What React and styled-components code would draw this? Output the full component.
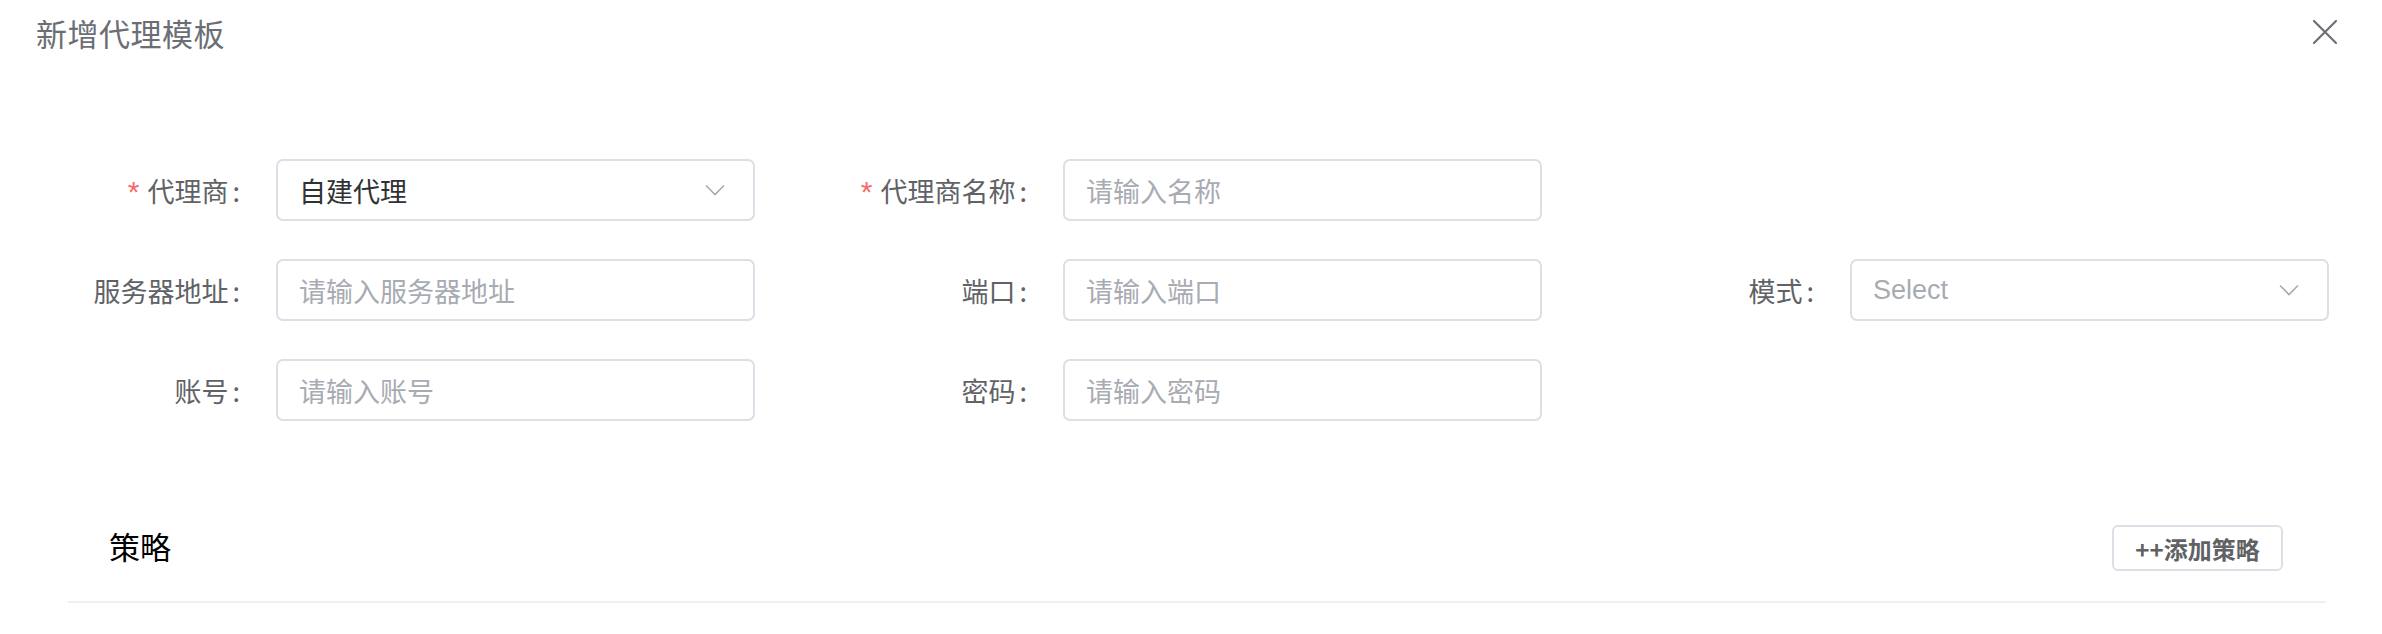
import React from "react";
import styled, { createGlobalStyle } from "styled-components";

const GlobalStyle = createGlobalStyle`
  html, body {
    margin: 0;
    padding: 0;
    background: #ffffff;
  }
  body {
    font-family: "Liberation Sans", "Noto Sans CJK SC", sans-serif;
  }
`;

const fields = [
  [
    { label: "代理商", required: true, value: "自建代理", select: true },
    { label: "代理商名称", required: true, placeholder: "请输入名称" },
    null,
  ],
  [
    { label: "服务器地址", placeholder: "请输入服务器地址" },
    { label: "端口", placeholder: "请输入端口" },
    { label: "模式", placeholder: "Select", select: true },
  ],
  [
    { label: "账号", placeholder: "请输入账号" },
    { label: "密码", placeholder: "请输入密码" },
    null,
  ],
];

function Chevron() {
  return (
    <svg width="20" height="12" viewBox="0 0 20 12" fill="none">
      <path d="M1 1.5 L10 10.5 L19 1.5" stroke="#a8abb2" strokeWidth="1.6" />
    </svg>
  );
}

function Field({ field }) {
  if (!field) return <Cell />;
  return (
    <Cell>
      <Label>
        {field.required && <Star>*</Star>}
        {field.label}
        <Colon>:</Colon>
      </Label>
      <InputBox>
        {field.value ? (
          <Value>{field.value}</Value>
        ) : (
          <Placeholder $latin={field.placeholder === "Select"}>
            {field.placeholder}
          </Placeholder>
        )}
        {field.select && <Chevron />}
      </InputBox>
    </Cell>
  );
}

export default function App() {
  return (
    <Dialog>
      <GlobalStyle />
      <Header>
        <Title>新增代理模板</Title>
        <Close aria-label="close">
          <svg width="26" height="26" viewBox="0 0 26 26">
            <path
              d="M2 2 L24 24 M24 2 L2 24"
              stroke="#6c6f75"
              strokeWidth="2.2"
              strokeLinecap="round"
            />
          </svg>
        </Close>
      </Header>

      <Form>
        {fields.map((row, i) => (
          <Row key={i}>
            {row.map((f, j) => (
              <Field key={j} field={f} />
            ))}
          </Row>
        ))}
      </Form>

      <Section>
        <SectionTitle>策略</SectionTitle>
        <AddButton>++添加策略</AddButton>
      </Section>
    </Dialog>
  );
}

const Dialog = styled.div`
  width: 2382px;
  height: 634px;
  background: #fff;
  overflow: hidden;
  font-family: "Liberation Sans", "Noto Sans CJK SC", sans-serif;
`;

const Header = styled.div`
  height: 64px;
  padding: 0 44px 0 36px;
  display: flex;
  align-items: center;
  justify-content: space-between;
`;

const Title = styled.div`
  font-family: "Noto Sans CJK SC", sans-serif;
  font-size: 31px;
  color: #6b6e73;
  letter-spacing: 0.5px;
`;

const Close = styled.div`
  width: 26px;
  height: 26px;
  display: flex;
`;

const Form = styled.div`
  padding: 95px 0 0 36px;
  display: flex;
  flex-direction: column;
  gap: 38px;
`;

const Row = styled.div`
  display: grid;
  grid-template-columns: repeat(3, 719px);
  column-gap: 68px;
`;

const Cell = styled.div`
  display: flex;
  align-items: center;
  height: 62px;
`;

const Label = styled.div`
  width: 240px;
  box-sizing: border-box;
  padding-right: 36px;
  text-align: right;
  font-family: "Noto Sans CJK SC", sans-serif;
  font-size: 27px;
  color: #606266;
  white-space: nowrap;
`;

const Colon = styled.span`
  margin-left: 4px;
`;

const Star = styled.span`
  font-family: "Liberation Sans", sans-serif;
  font-size: 30px;
  color: #f56c6c;
  margin-right: 8px;
`;

const InputBox = styled.div`
  width: 479px;
  height: 62px;
  box-sizing: border-box;
  border: 2px solid #dcdfe6;
  border-radius: 7px;
  padding: 0 28px 0 21px;
  display: flex;
  align-items: center;
  justify-content: space-between;
`;

const Value = styled.span`
  font-family: "Noto Sans CJK SC", sans-serif;
  font-size: 27px;
  color: #303133;
`;

const Placeholder = styled.span`
  font-family: ${(p) =>
    p.$latin
      ? `"Liberation Sans", sans-serif`
      : `"Noto Sans CJK SC", sans-serif`};
  font-size: 27px;
  color: #a8abb2;
`;

const Section = styled.div`
  margin: 68px 56px 0 68px;
  height: 112px;
  padding: 0 43px 0 41px;
  border-bottom: 2px solid #eeeff2;
  display: flex;
  align-items: center;
  justify-content: space-between;
`;

const SectionTitle = styled.div`
  font-family: "Noto Sans CJK SC", sans-serif;
  font-size: 31px;
  font-weight: 400;
  color: #000;
`;

const AddButton = styled.button`
  height: 46px;
  width: 171px;
  margin-top: 6px;
  border: 2px solid #dcdfe6;
  border-radius: 6px;
  background: #fff;
  font-family: "Noto Sans CJK SC", sans-serif;
  font-size: 24px;
  font-weight: 600;
  color: #606266;
  padding: 0;
  cursor: pointer;
`;
